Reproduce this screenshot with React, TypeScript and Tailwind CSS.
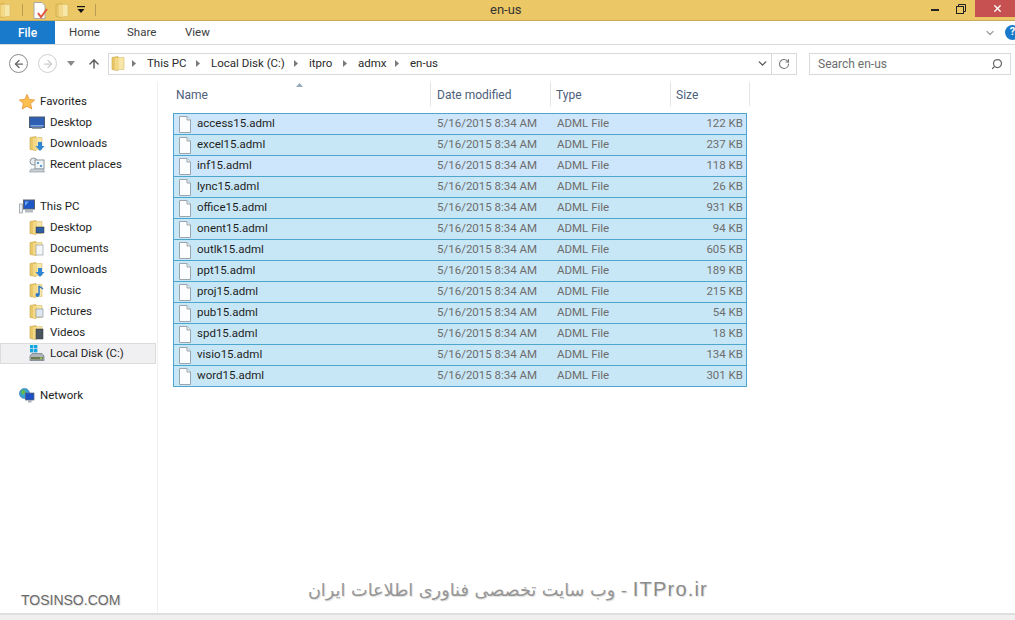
import type { ReactNode } from 'react';
import { ChevronDown, RotateCw, Search, ArrowLeft, ArrowRight, ArrowUp, X } from 'lucide-react';

const FILES = [
  { name: 'access15.adml', size: '122 KB' },
  { name: 'excel15.adml', size: '237 KB' },
  { name: 'inf15.adml', size: '118 KB' },
  { name: 'lync15.adml', size: '26 KB' },
  { name: 'office15.adml', size: '931 KB' },
  { name: 'onent15.adml', size: '94 KB' },
  { name: 'outlk15.adml', size: '605 KB' },
  { name: 'ppt15.adml', size: '189 KB' },
  { name: 'proj15.adml', size: '215 KB' },
  { name: 'pub15.adml', size: '54 KB' },
  { name: 'spd15.adml', size: '18 KB' },
  { name: 'visio15.adml', size: '134 KB' },
  { name: 'word15.adml', size: '301 KB' },
];

const CRUMBS = [
  { label: 'This PC', width: 'w-[64px]' },
  { label: 'Local Disk (C:)', width: 'w-[98px]' },
  { label: 'itpro', width: 'w-[49px]' },
  { label: 'admx', width: 'w-[52px]' },
  { label: 'en-us', width: 'w-[44px]' },
];

function Folder({ children }: { children?: ReactNode }) {
  return (
    <svg width="16" height="17" viewBox="0 0 16 17" className="shrink-0">
      <path d="M1 2.5 L7 1.5 V15.5 L1 14.5 Z" fill="#e8c868" stroke="#c9a548" strokeWidth="0.6" />
      <path d="M7 2.5 H13 V14.5 H7 Z" fill="#f6e6a8" stroke="#d8bd6a" strokeWidth="0.6" />
      <path d="M4 3.2 L8 2.4 V15.2 L4 14.4 Z" fill="#f3d987" />
      {children}
    </svg>
  );
}

function FileIcon() {
  return (
    <svg width="14" height="17" viewBox="0 0 14 17" className="shrink-0">
      <path d="M1.5 .5 H9 L12.5 4 V16.5 H1.5 Z" fill="#fbfdfe" stroke="#9aa5ad" />
      <path d="M9 .5 V4 H12.5" fill="#e9eef1" stroke="#9aa5ad" />
    </svg>
  );
}

function Star() {
  return (
    <svg width="16" height="16" viewBox="0 0 16 16" className="shrink-0">
      <path d="M8 .5 L10.2 5.4 L15.6 6 L11.6 9.6 L12.8 15 L8 12.2 L3.2 15 L4.4 9.6 L.4 6 L5.8 5.4 Z" fill="#fbc04f" stroke="#e58f2f" strokeWidth="0.8" />
    </svg>
  );
}

function Monitor() {
  return (
    <svg width="16" height="16" viewBox="0 0 16 16" className="shrink-0">
      <rect x=".5" y="2" width="15" height="10.5" fill="#2f5fb3" stroke="#4a5a70" />
      <path d="M1.5 10 H14.5 V11.5 H1.5 Z" fill="#7fa6de" />
      <rect x="3" y="12.5" width="10" height="1.5" fill="#8f9aa6" />
    </svg>
  );
}

function Recent() {
  return (
    <svg width="16" height="16" viewBox="0 0 16 16" className="shrink-0">
      <circle cx="4.5" cy="4.5" r="3.5" fill="#e7ebee" stroke="#8a949c" />
      <rect x="6" y="3" width="9" height="9" fill="#eef3f6" stroke="#8a949c" />
      <rect x="8" y="5" width="2" height="2" fill="#5f9dd0" />
      <rect x="11" y="8" width="2" height="2" fill="#5f9dd0" />
      <path d="M2 12 H14 L15.5 15 H.5 Z" fill="#c9d0d6" stroke="#858f97" strokeWidth="0.6" />
    </svg>
  );
}

function ThisPc() {
  return (
    <svg width="16" height="16" viewBox="0 0 16 16" className="shrink-0">
      <rect x=".5" y="5" width="3" height="9" fill="#e9edf0" stroke="#7f8890" strokeWidth="0.6" />
      <rect x="4.5" y="1" width="11" height="9" fill="#1c57c8" stroke="#59636e" />
      <path d="M6 2.5 H10 L6 7 Z" fill="#6fa4ee" />
      <rect x="6" y="11" width="8" height="2.5" fill="#b3bac1" />
    </svg>
  );
}

function Disk() {
  return (
    <svg width="16" height="17" viewBox="0 0 16 17" className="shrink-0">
      <rect x="1" y="0" width="3.4" height="3.4" fill="#16a7e0" />
      <rect x="5" y="0" width="3.4" height="3.4" fill="#16a7e0" />
      <rect x="1" y="4" width="3.4" height="3.4" fill="#16a7e0" />
      <rect x="5" y="4" width="3.4" height="3.4" fill="#16a7e0" />
      <path d="M1 11 L3 8.5 H13 L15 11 V15.5 H1 Z" fill="#aeb5ba" stroke="#6f777d" strokeWidth="0.7" />
      <rect x="2" y="12" width="12" height="2.5" fill="#6f7a52" />
      <rect x="11" y="12.5" width="2" height="1.3" fill="#9ddc5c" />
    </svg>
  );
}

function Globe() {
  return (
    <svg width="16" height="16" viewBox="0 0 16 16" className="shrink-0">
      <circle cx="5.5" cy="5.5" r="5" fill="#39a0d8" stroke="#2b6f9d" strokeWidth="0.6" />
      <path d="M2 3 L5 1.5 L6.5 4 L4 7 L2.5 6 Z" fill="#63b84a" />
      <rect x="6.5" y="5" width="8.5" height="7" fill="#1c50c4" stroke="#5b6570" strokeWidth="0.7" />
      <rect x="9" y="12" width="3.5" height="2.5" fill="#a7aeb5" />
    </svg>
  );
}

function TreeItem({ icon, label, sub, selected }: { icon: ReactNode; label: string; sub?: boolean; selected?: boolean }) {
  return (
    <div
      className={
        'flex h-[21px] items-center gap-[5px] ' +
        (selected ? 'w-[156px] border border-[#dcdcdc] bg-[#f0f0f2] pl-[28px]' : sub ? 'pl-[29px]' : 'pl-[19px]')
      }
    >
      {icon}
      <span>{label}</span>
    </div>
  );
}

export default function App() {
  return (
    <div className="flex h-[620px] w-[1015px] flex-col overflow-hidden bg-white font-['Roboto',sans-serif] text-[11.5px] text-[#1e1e1e]">
      {/* title bar */}
      <div className="relative flex h-[21px] items-start border-b border-[#c9a95a] bg-[#ecc765]">
        <div className="flex h-[20px] items-center">
          <div className="-ml-[3px]"><Folder /></div>
          <div className="ml-[9px] h-[12px] w-px bg-[#b89c55]" />
          <svg width="15" height="17" viewBox="0 0 15 17" className="ml-[10px] mt-[1px]">
            <path d="M1 .5 H9 L12 3.5 V16.5 H1 Z" fill="#fff" stroke="#a9a9a9" />
            <path d="M5 11 L8 15 L14 7" fill="none" stroke="#e0563b" strokeWidth="2" />
          </svg>
          <div className="ml-[7px]"><Folder /></div>
          <svg width="8" height="8" viewBox="0 0 8 8" className="ml-[6px]">
            <rect x="0" y="0" width="8" height="1.2" fill="#111" />
            <path d="M.5 3 H7.5 L4 7 Z" fill="#111" />
          </svg>
          <div className="ml-[10px] h-[12px] w-px bg-[#b89c55]" />
        </div>
        <span className="absolute left-[490px] top-[1px] text-[13px] leading-[18px] text-[#333]">en-us</span>
        <div className="ml-auto flex h-[17px] items-center">
          <div className="mr-[17px] mt-[3px] h-[2px] w-[8px] bg-[#222]" />
          <svg width="10" height="10" viewBox="0 0 10 10" className="mr-[9px]">
            <rect x=".5" y="2.5" width="7" height="7" fill="none" stroke="#222" />
            <path d="M2.5 2 V.5 H9.5 V7.5 H8" fill="none" stroke="#222" />
          </svg>
          <div className="flex h-[17px] w-[40px] items-center justify-center bg-[#c75050] pl-[4px]">
            <X size={11} strokeWidth={3} className="text-white" />
          </div>
        </div>
      </div>

      {/* ribbon tabs */}
      <div className="flex h-[24px] items-stretch border-b border-[#dadbdc]">
        <div className="flex w-[55px] items-center justify-center bg-[#1979ca] text-[12px] font-medium text-white">File</div>
        <span className="ml-[14px] w-[58px] self-center text-[#3c3c3c]">Home</span>
        <span className="w-[58px] self-center text-[#3c3c3c]">Share</span>
        <span className="self-center text-[#3c3c3c]">View</span>
        <div className="ml-auto flex items-center">
          <ChevronDown size={12} strokeWidth={2.5} className="mr-[9px] text-[#a0a0a0]" />
          <div className="-mr-[5px] flex h-[15px] w-[15px] items-center justify-center rounded-full bg-[#1979ca] text-[11px] font-bold text-white">?</div>
        </div>
      </div>

      {/* address row */}
      <div className="flex h-[37px] items-center">
        <div className="ml-[9px] flex h-[19px] w-[19px] items-center justify-center rounded-full border border-[#8b8b8b]">
          <ArrowLeft size={12} strokeWidth={2.5} className="text-[#666]" />
        </div>
        <div className="ml-[10px] flex h-[19px] w-[19px] items-center justify-center rounded-full border border-[#cfcfcf]">
          <ArrowRight size={12} strokeWidth={2.5} className="text-[#cdcdcd]" />
        </div>
        <svg width="8" height="5" viewBox="0 0 8 5" className="ml-[10px]"><path d="M0 0 H8 L4 5 Z" fill="#8a8a8a" /></svg>
        <ArrowUp size={14} strokeWidth={2.5} className="ml-[12px] text-[#5f5f5f]" />
        <div className="ml-[7px] flex h-[22px] w-[689px] items-center border border-[#d9d9d9]">
          <div className="ml-[2px] mr-[5px]"><Folder /></div>
          {CRUMBS.map((c) => (
            <div key={c.label} className={'flex items-center gap-[11px] ' + c.width}>
              <svg width="4" height="7" viewBox="0 0 4 7" className="shrink-0"><path d="M0 0 L4 3.5 L0 7 Z" fill="#7a7a7a" /></svg>
              <span className="whitespace-nowrap text-[#2a2a2a]">{c.label}</span>
            </div>
          ))}
          <ChevronDown size={13} strokeWidth={2.5} className="ml-auto mr-[2px] text-[#555]" />
          <div className="flex h-full w-[25px] items-center justify-center border-l border-[#d9d9d9]">
            <RotateCw size={12} strokeWidth={2.2} className="text-[#777]" />
          </div>
        </div>
        <div className="ml-[12px] flex h-[22px] w-[202px] items-center justify-between border border-[#d9d9d9] pl-[8px] pr-[7px] text-[12px] text-[#6d6d6d]">
          <span>Search en-us</span>
          <Search size={12} strokeWidth={2.5} className="-scale-x-100 text-[#666]" />
        </div>
      </div>

      {/* main */}
      <div className="relative flex flex-1">
        <aside className="w-[158px] shrink-0 border-r border-[#f0f0f0] pt-[9px]">
          <TreeItem icon={<Star />} label="Favorites" />
          <TreeItem sub icon={<Monitor />} label="Desktop" />
          <TreeItem sub icon={<Folder><path d="M9 7 H13 V11 H15.5 L11 16 L6.5 11 H9 Z" fill="#2f86d6" /></Folder>} label="Downloads" />
          <TreeItem sub icon={<Recent />} label="Recent places" />
          <div className="h-[21px]" />
          <TreeItem icon={<ThisPc />} label="This PC" />
          <TreeItem sub icon={<Folder><rect x="7" y="8" width="8" height="6" fill="#2f5fa3" stroke="#333" strokeWidth="0.5" /></Folder>} label="Desktop" />
          <TreeItem sub icon={<Folder><rect x="7" y="5" width="7" height="10" fill="#f4f6f8" stroke="#8b959d" strokeWidth="0.6" /></Folder>} label="Documents" />
          <TreeItem sub icon={<Folder><path d="M9 7 H13 V11 H15.5 L11 16 L6.5 11 H9 Z" fill="#2f86d6" /></Folder>} label="Downloads" />
          <TreeItem sub icon={<Folder><path d="M10 4 V13 M10 4 L14 7" stroke="#2f78c4" strokeWidth="1.5" fill="none" /><circle cx="8.5" cy="13" r="2" fill="#2f78c4" /></Folder>} label="Music" />
          <TreeItem sub icon={<Folder><rect x="7" y="6" width="7" height="8" fill="#dfe7ee" stroke="#7f8b95" strokeWidth="0.6" /></Folder>} label="Pictures" />
          <TreeItem sub icon={<Folder><rect x="7" y="5" width="7" height="10" fill="#4a5560" stroke="#333" strokeWidth="0.5" /></Folder>} label="Videos" />
          <TreeItem sub selected icon={<Disk />} label="Local Disk (C:)" />
          <div className="h-[21px]" />
          <TreeItem icon={<Globe />} label="Network" />
        </aside>

        <section className="flex-1 pl-[15px]">
          <div className="relative flex h-[31px] w-[592px] items-start text-[12px] text-[#4c607a]">
            <div className="h-[24px] w-[257px] pl-[3px] pt-[4px]">Name</div>
            <div className="h-[24px] w-[120px] border-l border-[#e5e5e5] pl-[6px] pt-[4px]">Date modified</div>
            <div className="h-[24px] w-[120px] border-l border-[#e5e5e5] pl-[5px] pt-[4px]">Type</div>
            <div className="h-[24px] w-[80px] border-x border-[#e5e5e5] pl-[5px] pt-[4px]">Size</div>
            <svg width="7" height="4" viewBox="0 0 7 4" className="absolute left-[123px] top-[1px]"><path d="M0 4 L3.5 0 L7 4 Z" fill="#97a9bd" /></svg>
          </div>
          <div className="w-[574px] border border-b-0 border-[#4ea6cd]">
            {FILES.map((f, i) => (
              <div
                key={f.name}
                className={
                  'flex h-[21px] items-center border-b border-[#4ea6cd] ' +
                  (i === 0 || i === 2 ? 'bg-[#cde6fb]' : 'bg-[#c8e7f6]')
                }
              >
                <div className="flex w-[263px] items-center gap-[5px] pl-[4px]">
                  <FileIcon />
                  <span>{f.name}</span>
                </div>
                <div className="w-[120px] text-[#6d6d6d]">5/16/2015 8:34 AM</div>
                <div className="w-[120px] text-[#6d6d6d]">ADML File</div>
                <div className="w-[66px] text-right text-[#6d6d6d]">{f.size}</div>
              </div>
            ))}
          </div>
        </section>

        {/* watermark burned into the capture */}
        <span className="absolute left-[21px] top-[508px] font-['Liberation_Sans',sans-serif] text-[14px] leading-[20px] text-[#6a6a6a] [text-shadow:1px_1px_1px_#ddd]">
          TOSINSO.COM
        </span>
        <span
          dir="rtl"
          className="absolute left-[307px] top-[494px] w-[401px] whitespace-nowrap font-['DejaVu_Sans',sans-serif] text-[17.7px] leading-[26px] text-[#969696] [text-shadow:1px_1px_1px_#ddd]"
        >
          <span className="font-['Liberation_Sans',sans-serif] text-[20px] tracking-[1.2px] text-[#8a8a8a]">ITPro.ir</span> - وب سایت تخصصی فناوری اطلاعات ایران
        </span>
      </div>

      {/* status bar */}
      <div className="h-[7px] border-t-2 border-[#dedede] bg-[#f0f0f0]" />
    </div>
  );
}
